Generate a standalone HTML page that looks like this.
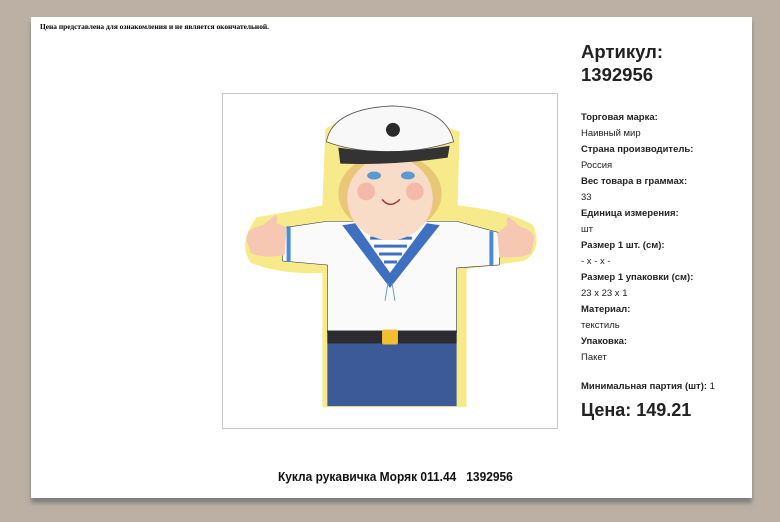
<!DOCTYPE html>
<html><head><meta charset="utf-8"><style>
html,body{margin:0;padding:0;}
body{width:780px;height:522px;background:#bcb0a4;position:relative;overflow:hidden;font-family:"Liberation Sans",Arial,sans-serif;}
.page{position:absolute;left:31px;top:17px;width:721px;height:481px;background:#fff;box-shadow:0 5px 4px #7f7f7f;}
.note{position:absolute;left:40px;top:22px;font-family:"Liberation Serif",serif;font-size:7.4px;font-weight:bold;color:#000;}
.img{position:absolute;left:222px;top:93px;width:334px;height:334px;border:1px solid #c8c8c8;}
.art{position:absolute;left:581px;top:40px;font-size:18.5px;font-weight:bold;color:#222;line-height:23px;}
.props{position:absolute;left:581px;top:110px;font-size:9.5px;color:#222;line-height:16px;}
.min{position:absolute;left:581px;top:381px;font-size:9.5px;color:#222;}
.price{position:absolute;left:581px;top:400px;font-size:18px;font-weight:bold;color:#222;}
.cap{position:absolute;left:5px;width:780px;text-align:center;top:469px;font-size:13px;font-weight:bold;color:#111;transform:scaleX(0.92);transform-origin:395px 0;}
</style></head><body>
<div class="page"></div>
<div class="note">Цена представлена для ознакомления и не является окончательной.</div>
<div class="img">
<svg width="334" height="334" viewBox="0 0 336 336">
<path d="M103,35 Q150,5 238,38 L236,112 Q290,118 312,132 Q322,158 302,168 L245,176 L245,315 L100,315 L100,180 Q60,182 28,170 Q14,150 34,124 Q80,116 100,112 Z" fill="#f7ea8a"/>
<path d="M58,135 L105,128 L235,128 L280,140 L278,172 L235,175 L235,240 L105,240 L105,172 L60,168 Z" fill="#fafafa" stroke="#333" stroke-width="0.6"/>
<path d="M120,132 L168,195 L218,132 L205,130 L168,180 L133,130 Z" fill="#3f6fc0"/>
<path d="M140,135 L168,175 L198,135 Z" fill="#fff"/>
<g stroke="#3f6fc0" stroke-width="3"><line x1="148" y1="145" x2="190" y2="145"/><line x1="152" y1="153" x2="185" y2="153"/><line x1="157" y1="161" x2="180" y2="161"/><line x1="162" y1="169" x2="175" y2="169"/></g>
<path d="M166,190 L163,208 M170,190 L173,208" stroke="#6aa0d0" stroke-width="1"/>
<rect x="64" y="133" width="4" height="36" fill="#4a8ad8"/><rect x="268" y="138" width="4" height="34" fill="#4a8ad8"/>
<path d="M24,148 Q22,135 40,132 L52,122 Q56,122 54,130 L64,134 L62,162 Q40,166 28,160 Z" fill="#f6c8b4"/>
<path d="M312,150 Q316,138 300,134 L288,124 Q284,124 286,132 L276,140 L278,164 Q300,166 310,160 Z" fill="#f6c8b4"/>
<rect x="105" y="238" width="130" height="76" fill="#3c5a98"/>
<rect x="105" y="238" width="130" height="13" fill="#2c2c30"/>
<rect x="160" y="237" width="16" height="15" rx="2" fill="#f0c030"/>
<ellipse cx="168" cy="100" rx="52" ry="40" fill="#e8c878"/>
<ellipse cx="168" cy="105" rx="43" ry="42" fill="#f8dcc8"/>
<ellipse cx="152" cy="82" rx="7" ry="4" fill="#5a9ad0"/><ellipse cx="186" cy="82" rx="7" ry="4" fill="#5a9ad0"/>
<circle cx="144" cy="98" r="9" fill="#f3aaa0" opacity=".7"/><circle cx="193" cy="98" r="9" fill="#f3aaa0" opacity=".7"/>
<path d="M160,106 Q168,116 178,106" stroke="#a33" stroke-width="1.5" fill="none"/>
<path d="M104,48 Q110,15 170,12 Q225,14 232,48 Q200,58 168,58 Q130,58 104,48 Z" fill="#f8f8f8" stroke="#555" stroke-width="0.8"/>
<path d="M116,54 Q170,62 228,52 L226,64 Q170,72 118,70 Z" fill="#333"/>
<circle cx="171" cy="36" r="7" fill="#2a2a2a"/>
</svg>
</div>
<div class="art">Артикул:<br>1392956</div>
<div class="props">
<b>Торговая марка:</b><br>Наивный мир<br>
<b>Страна производитель:</b><br>Россия<br>
<b>Вес товара в граммах:</b><br>33<br>
<b>Единица измерения:</b><br>шт<br>
<b>Размер 1 шт. (см):</b><br>- x - x -<br>
<b>Размер 1 упаковки (см):</b><br>23 x 23 x 1<br>
<b>Материал:</b><br>текстиль<br>
<b>Упаковка:</b><br>Пакет
</div>
<div class="min"><b>Минимальная партия (шт):</b> 1</div>
<div class="price">Цена: 149.21</div>
<div class="cap">Кукла рукавичка Моряк 011.44 &nbsp; 1392956</div>
</body></html>
